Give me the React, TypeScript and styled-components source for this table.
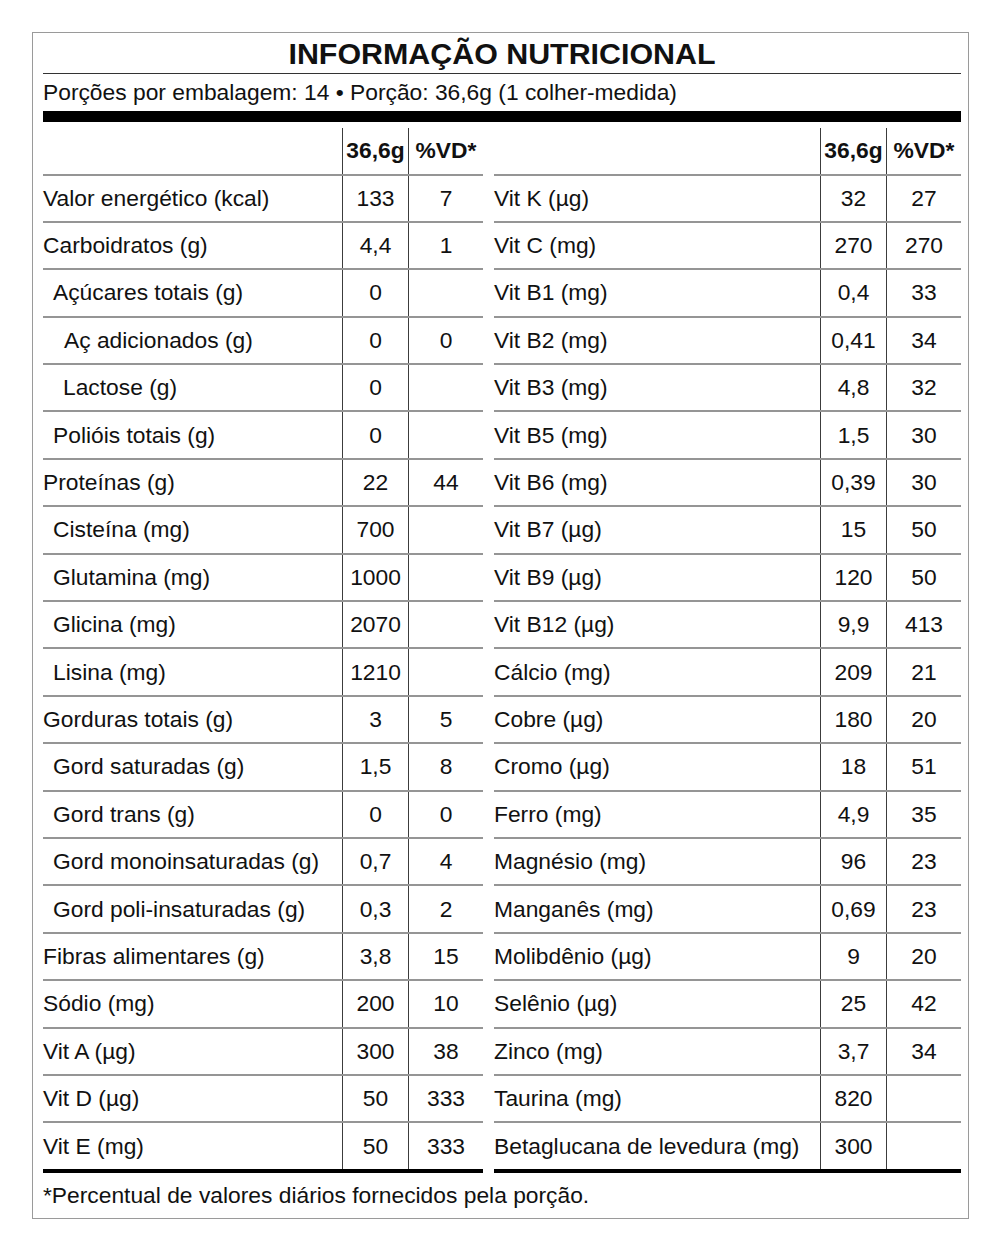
import React from "react";
import styled, { createGlobalStyle } from "styled-components";

const GlobalStyle = createGlobalStyle`
  html, body {
    margin: 0;
    padding: 0;
    background: #ffffff;
  }
  body {
    font-family: "Liberation Sans", Arial, sans-serif;
    color: #111111;
  }
`;

const Card = styled.div`
  box-sizing: border-box;
  width: 937px;
  margin: 32px 0 0 32px;
  border: 1px solid #9a9a9a;
  padding: 0 7px 0 10px;
  display: flex;
  flex-direction: column;
`;

const Title = styled.h1`
  margin: 0;
  height: 40px;
  border-bottom: 1px solid #333;
  display: flex;
  align-items: center;
  justify-content: center;
  font-size: 30.4px;
  font-weight: 700;
  line-height: 1;
  letter-spacing: 0;
`;

const Serving = styled.div`
  height: 37px;
  display: flex;
  align-items: center;
  font-size: 22.8px;
`;

const Bar = styled.div`
  height: 11px;
  background: #000;
`;

const Tables = styled.div`
  display: grid;
  grid-template-columns: 440px 467px;
  column-gap: 11px;
  padding-top: 6px;
`;

const Table = styled.div`
  display: flex;
  flex-direction: column;
  border-bottom: 4px solid #000;
`;

const Row = styled.div<{ $cols: string; $header?: boolean }>`
  box-sizing: border-box;
  display: grid;
  grid-template-columns: ${(p) => p.$cols};
  height: ${(p) => (p.$header ? "47.5px" : "47.4px")};
  border-bottom: 2px solid #959595;
  font-size: 22.8px;
  font-weight: ${(p) => (p.$header ? 700 : 400)};

  &:last-child {
    border-bottom: none;
    height: 45.4px;
  }
`;

const Label = styled.div<{ $indent: number }>`
  display: flex;
  align-items: center;
  padding-left: ${(p) => p.$indent}px;
  white-space: nowrap;
`;

const Num = styled.div`
  display: flex;
  align-items: center;
  justify-content: center;
  border-left: 1px solid #3c3c3c;
  white-space: nowrap;
`;

const Footer = styled.div`
  height: 45px;
  display: flex;
  align-items: center;
  font-size: 22.8px;
`;

type Item = [string, string, string, number?];

const left: Item[] = [
  ["Valor energético (kcal)", "133", "7"],
  ["Carboidratos (g)", "4,4", "1"],
  ["Açúcares totais (g)", "0", "", 10],
  ["Aç adicionados (g)", "0", "0", 21],
  ["Lactose (g)", "0", "", 20],
  ["Polióis totais (g)", "0", "", 10],
  ["Proteínas (g)", "22", "44"],
  ["Cisteína (mg)", "700", "", 10],
  ["Glutamina (mg)", "1000", "", 10],
  ["Glicina (mg)", "2070", "", 10],
  ["Lisina (mg)", "1210", "", 10],
  ["Gorduras totais (g)", "3", "5"],
  ["Gord saturadas (g)", "1,5", "8", 10],
  ["Gord trans (g)", "0", "0", 10],
  ["Gord monoinsaturadas (g)", "0,7", "4", 10],
  ["Gord poli-insaturadas (g)", "0,3", "2", 10],
  ["Fibras alimentares (g)", "3,8", "15"],
  ["Sódio (mg)", "200", "10"],
  ["Vit A (µg)", "300", "38"],
  ["Vit D (µg)", "50", "333"],
  ["Vit E (mg)", "50", "333"],
];

const right: Item[] = [
  ["Vit K (µg)", "32", "27"],
  ["Vit C (mg)", "270", "270"],
  ["Vit B1 (mg)", "0,4", "33"],
  ["Vit B2 (mg)", "0,41", "34"],
  ["Vit B3 (mg)", "4,8", "32"],
  ["Vit B5 (mg)", "1,5", "30"],
  ["Vit B6 (mg)", "0,39", "30"],
  ["Vit B7 (µg)", "15", "50"],
  ["Vit B9 (µg)", "120", "50"],
  ["Vit B12 (µg)", "9,9", "413"],
  ["Cálcio (mg)", "209", "21"],
  ["Cobre (µg)", "180", "20"],
  ["Cromo (µg)", "18", "51"],
  ["Ferro (mg)", "4,9", "35"],
  ["Magnésio (mg)", "96", "23"],
  ["Manganês (mg)", "0,69", "23"],
  ["Molibdênio (µg)", "9", "20"],
  ["Selênio (µg)", "25", "42"],
  ["Zinco (mg)", "3,7", "34"],
  ["Taurina (mg)", "820", ""],
  ["Betaglucana de levedura (mg)", "300", ""],
];

function NutrientTable({ items, cols }: { items: Item[]; cols: string }) {
  return (
    <Table>
      <Row $cols={cols} $header>
        <Label $indent={0} />
        <Num>36,6g</Num>
        <Num>%VD*</Num>
      </Row>
      {items.map(([name, qty, vd, indent]) => (
        <Row $cols={cols} key={name}>
          <Label $indent={indent ?? 0}>{name}</Label>
          <Num>{qty}</Num>
          <Num>{vd}</Num>
        </Row>
      ))}
    </Table>
  );
}

export default function App() {
  return (
    <>
      <GlobalStyle />
      <Card>
        <Title>INFORMAÇÃO NUTRICIONAL</Title>
        <Serving>Porções por embalagem: 14 • Porção: 36,6g (1 colher-medida)</Serving>
        <Bar />
        <Tables>
          <NutrientTable items={left} cols="299px 66px 75px" />
          <NutrientTable items={right} cols="326px 66px 75px" />
        </Tables>
        <Footer>*Percentual de valores diários fornecidos pela porção.</Footer>
      </Card>
    </>
  );
}
